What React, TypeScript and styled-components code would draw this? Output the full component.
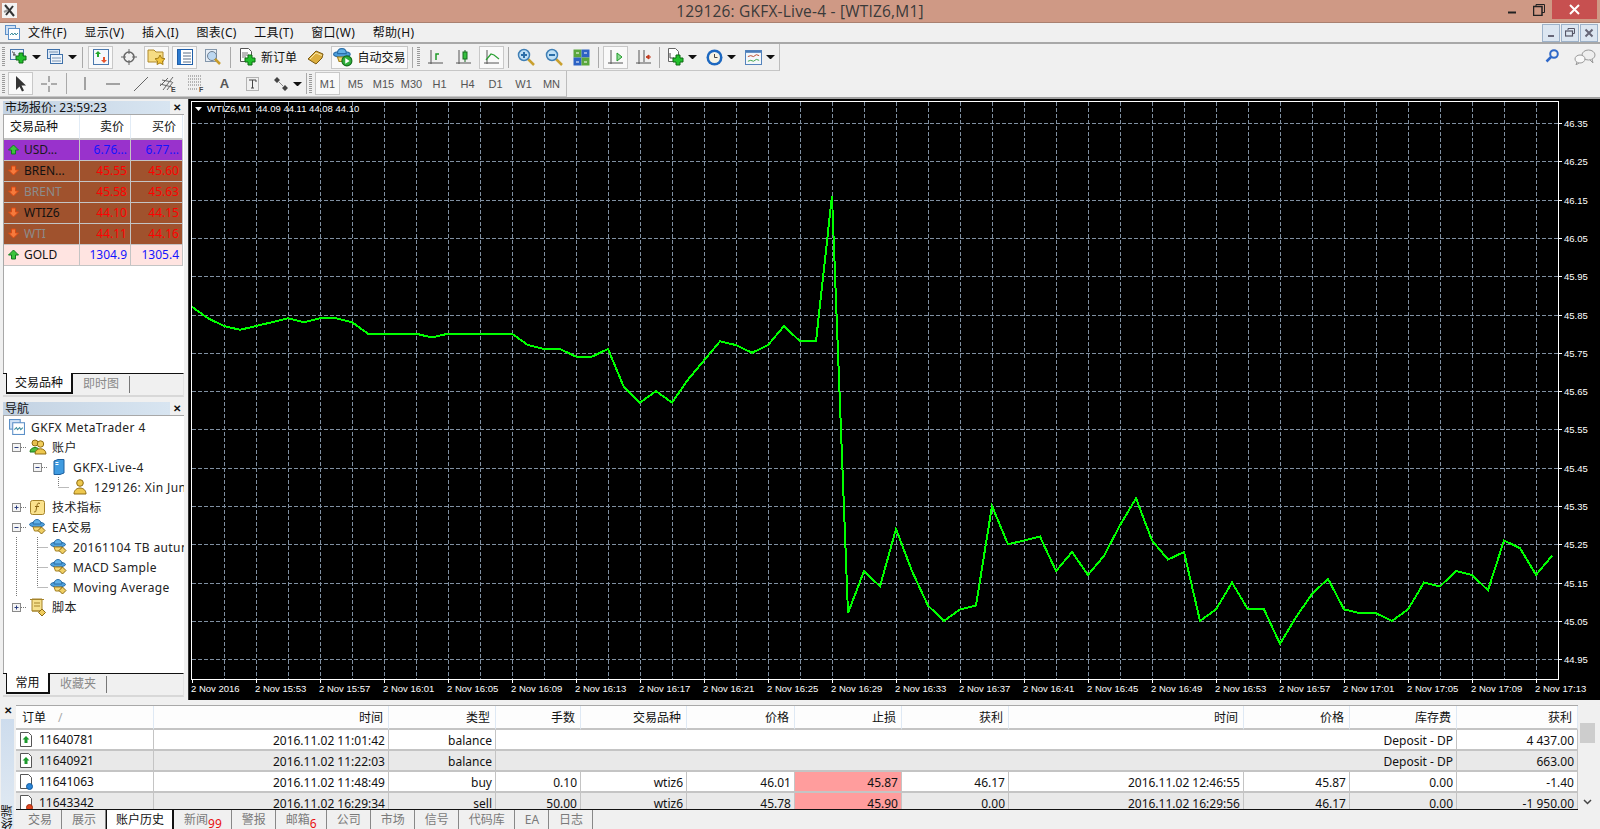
import React from 'react';
import styled, { createGlobalStyle } from 'styled-components';

const UI_FONT = '"Noto Sans", "Noto Sans CJK SC", sans-serif';

const GlobalStyle = createGlobalStyle`
  html, body { margin: 0; padding: 0; background: #f0f0f0; overflow: hidden; }
  body { font-family: ${UI_FONT}; font-size: 12px; color: #111; }
  * { box-sizing: border-box; }
`;

const PRICES = [
  45.87, 45.84, 45.82, 45.81, 45.82, 45.83, 45.84, 45.83, 45.84, 45.84, 45.83, 45.8, 45.8, 45.8, 45.8, 45.79, 45.8, 45.8,
  45.8, 45.8, 45.8, 45.77, 45.76, 45.76, 45.74, 45.74, 45.76, 45.66, 45.62, 45.65, 45.62, 45.68, 45.73, 45.78, 45.77,
  45.75, 45.77, 45.82, 45.78, 45.78, 46.16, 45.07, 45.18, 45.14, 45.29, 45.18, 45.09, 45.05, 45.08, 45.09, 45.35, 45.25,
  45.26, 45.27, 45.18, 45.23, 45.17, 45.22, 45.3, 45.37, 45.26, 45.21, 45.23, 45.05, 45.08, 45.15, 45.08, 45.08, 44.99,
  45.06, 45.12, 45.16, 45.08, 45.07, 45.07, 45.05, 45.08, 45.15, 45.14, 45.18, 45.17, 45.13, 45.26, 45.24, 45.17, 45.22,
];

const TIME_LABELS = [
  '2 Nov 2016', '2 Nov 15:53', '2 Nov 15:57', '2 Nov 16:01', '2 Nov 16:05', '2 Nov 16:09', '2 Nov 16:13', '2 Nov 16:17',
  '2 Nov 16:21', '2 Nov 16:25', '2 Nov 16:29', '2 Nov 16:33', '2 Nov 16:37', '2 Nov 16:41', '2 Nov 16:45', '2 Nov 16:49',
  '2 Nov 16:53', '2 Nov 16:57', '2 Nov 17:01', '2 Nov 17:05', '2 Nov 17:09', '2 Nov 17:13',
];

const QUOTES = [
  { name: 'USD...', bid: '6.76...', ask: '6.77...', bg: '#9932cc', up: true, nameColor: '#1a1a1a', priceColor: '#1414ff' },
  { name: 'BREN...', bid: '45.55', ask: '45.60', bg: '#a0522d', up: false, nameColor: '#111', priceColor: '#ff0000' },
  { name: 'BRENT', bid: '45.58', ask: '45.63', bg: '#a0522d', up: false, nameColor: '#8c8c8c', priceColor: '#ff0000' },
  { name: 'WTIZ6', bid: '44.10', ask: '44.15', bg: '#a0522d', up: false, nameColor: '#111', priceColor: '#ff0000' },
  { name: 'WTI', bid: '44.11', ask: '44.16', bg: '#a0522d', up: false, nameColor: '#8c8c8c', priceColor: '#ff0000' },
  { name: 'GOLD', bid: '1304.9', ask: '1305.4', bg: '#ffe4e1', up: true, nameColor: '#111', priceColor: '#1414ff' },
];

const MENU = ['文件(F)', '显示(V)', '插入(I)', '图表(C)', '工具(T)', '窗口(W)', '帮助(H)'];
const PERIODS = ['M1', 'M5', 'M15', 'M30', 'H1', 'H4', 'D1', 'W1', 'MN'];
const COLUMNS = ['订单', '时间', '类型', '手数', '交易品种', '价格', '止损', '获利', '时间', '价格', '库存费', '获利'];
const GRID = '138px 235px 107px 85px 106px 108px 107px 107px 235px 106px 107px 121px';

/* ---------- icons ---------- */

const Plus = ({ x = 8, y = 8 }: { x?: number; y?: number }) => (
  <path d={`M${x + 3} ${y}h4v3h3v4h-3v3h-4v-3h-3v-4h3z`} fill="#22c02c" stroke="#0d6b12" strokeWidth="1" />
);

const NewChartIcon = () => (
  <svg width="20" height="18" viewBox="0 0 20 18">
    <rect x="1.5" y="1.5" width="13" height="10" fill="#e8f0fa" stroke="#4a78ad" />
    <path d="M3 4h1M5 4v3M4 7h3" stroke="#333" fill="none" />
    <Plus x={7} y={5} />
  </svg>
);

const ProfilesIcon = () => (
  <svg width="18" height="18" viewBox="0 0 18 18">
    <rect x="1.5" y="1.5" width="12" height="9" fill="#dbe8f6" stroke="#3f70a8" />
    <rect x="4.5" y="6.5" width="12" height="9" fill="#eef4fb" stroke="#3f70a8" />
    <path d="M3 4h9M6 10h9M6 13h9" stroke="#7a94b2" />
  </svg>
);

const WatchIcon = () => (
  <svg width="16" height="16" viewBox="0 0 16 16">
    <rect x="0.5" y="0.5" width="15" height="15" fill="#f5f8fc" stroke="#4a78ad" />
    <path d="M5 2l3 3H6v3H4V5H2z" fill="#23a82c" />
    <path d="M11 14l-3-3h2V8h2v3h2z" fill="#e8522a" />
  </svg>
);

const CrossCircleIcon = () => (
  <svg width="16" height="16" viewBox="0 0 16 16" fill="none" stroke="#666">
    <circle cx="8" cy="8" r="5" strokeWidth="1.5" />
    <path d="M8 0v5M8 11v5M0 8h5M11 8h5" />
  </svg>
);

const FolderStarIcon = () => (
  <svg width="20" height="18" viewBox="0 0 20 18">
    <path d="M1 2h6l2 2h7v10H1z" fill="#f6dc84" stroke="#b08a2c" />
    <path d="M13 7l1.6 3.2 3.4.5-2.5 2.4.6 3.4-3.1-1.6-3 1.6.6-3.4L8 10.7l3.4-.5z" fill="#f4c63c" stroke="#a37c16" />
  </svg>
);

const NavigatorIcon = () => (
  <svg width="16" height="16" viewBox="0 0 16 16">
    <rect x="0.5" y="0.5" width="15" height="15" fill="#fff" stroke="#1f5ea8" />
    <rect x="1" y="1" width="3" height="14" fill="#2e7cd0" />
    <path d="M6 4h8M6 7h8M6 10h8M6 13h8" stroke="#5a6f86" />
  </svg>
);

const TesterIcon = () => (
  <svg width="18" height="18" viewBox="0 0 18 18">
    <rect x="1.5" y="1.5" width="11" height="12" fill="#e6edf5" stroke="#8497ab" />
    <circle cx="8" cy="8" r="4.5" fill="#bcd7f0" stroke="#6f7f90" />
    <path d="M11 11l5 5" stroke="#c79b2b" strokeWidth="2.5" />
  </svg>
);

const NewOrderIcon = () => (
  <svg width="18" height="20" viewBox="0 0 18 20">
    <path d="M1.5 1.5h8l3 3v10h-11z" fill="#fff" stroke="#555" />
    <path d="M3 6h6M3 8h7M3 10h4" stroke="#777" />
    <Plus x={6} y={8} />
  </svg>
);

const BookIcon = () => (
  <svg width="18" height="16" viewBox="0 0 18 16">
    <path d="M1 10L9 2l7 3-1 4-6 6z" fill="#dcae3e" stroke="#7b5a12" />
    <path d="M3 10l6-6 6 2.5" fill="none" stroke="#f7e7a8" />
  </svg>
);

const HatIcon = ({ size = 18, badge = 'play' }: { size?: number; badge?: 'play' | 'diamond' }) => (
  <svg width={size} height={size} viewBox="0 0 18 18">
    <ellipse cx="8" cy="6.5" rx="7.5" ry="2.5" fill="#4ea0dc" stroke="#2a6ea8" />
    <path d="M4 6c0-6 8-6 8 0z" fill="#62b2e8" stroke="#2a6ea8" />
    <path d="M4 9h8l-1.5 4h-5z" fill="#f3d778" stroke="#a5801c" />
    {badge === 'play' ? (
      <>
        <circle cx="12.5" cy="12.5" r="4.5" fill="#2fae3a" stroke="#126b1a" />
        <path d="M11 10l4 2.5-4 2.5z" fill="#fff" />
      </>
    ) : (
      <path d="M12.5 9l3.5 3.5-3.5 3.5-3.5-3.5z" fill="#f0cf63" stroke="#8d6b12" />
    )}
  </svg>
);

const Axes = () => <path d="M4 1v14M1 14h15" stroke="#555" fill="none" />;

const BarChartIcon = () => (
  <svg width="18" height="17" viewBox="0 0 18 17">
    <Axes />
    <path d="M9 11V5h3" stroke="#1f9a28" strokeWidth="1.5" fill="none" />
  </svg>
);

const CandleIcon = () => (
  <svg width="18" height="17" viewBox="0 0 18 17">
    <Axes />
    <path d="M10 1v12" stroke="#146b1c" />
    <rect x="8" y="3" width="4" height="7" fill="#35c03f" stroke="#146b1c" />
  </svg>
);

const LineChartIcon = () => (
  <svg width="18" height="17" viewBox="0 0 18 17">
    <Axes />
    <path d="M3 11l5-6 3 1 5 4" stroke="#2aa033" strokeWidth="1.2" fill="none" />
  </svg>
);

const ZoomIcon = ({ minus = false }: { minus?: boolean }) => (
  <svg width="18" height="18" viewBox="0 0 18 18">
    <path d="M11 11l6 6" stroke="#c9a02f" strokeWidth="2.5" />
    <circle cx="7" cy="7" r="5.5" fill="#bfe0f6" stroke="#3f7fb5" strokeWidth="1.5" />
    <path d={minus ? 'M4 7h6' : 'M4 7h6M7 4v6'} stroke="#2a6ea8" strokeWidth="2" />
  </svg>
);

const TileIcon = () => (
  <svg width="17" height="17" viewBox="0 0 17 17">
    <rect x="0.5" y="0.5" width="8" height="8" fill="#5aa73c" />
    <rect x="8.5" y="0.5" width="8" height="8" fill="#2d62c4" />
    <rect x="0.5" y="8.5" width="8" height="8" fill="#2d62c4" />
    <rect x="8.5" y="8.5" width="8" height="8" fill="#5aa73c" />
    <path d="M3 4h3M11 4h3M3 13h3M11 13h3" stroke="#fff" />
  </svg>
);

const AutoScrollIcon = () => (
  <svg width="18" height="17" viewBox="0 0 18 17">
    <Axes />
    <path d="M10 4l5 4-5 4z" fill="#8fdc94" stroke="#1f9a28" />
  </svg>
);

const ShiftIcon = () => (
  <svg width="18" height="17" viewBox="0 0 18 17">
    <Axes />
    <path d="M9 1v12" stroke="#555" />
    <path d="M16 8h-3M14 6l-3 2 3 2z" fill="#c23b1e" stroke="#c23b1e" />
  </svg>
);

const TemplateIcon = () => (
  <svg width="18" height="20" viewBox="0 0 18 20">
    <path d="M1.5 1.5h7l3 3v10h-10z" fill="#fff" stroke="#666" />
    <path d="M3 6v5h4" stroke="#444" fill="none" />
    <Plus x={6} y={8} />
  </svg>
);

const ClockIcon = () => (
  <svg width="17" height="17" viewBox="0 0 17 17">
    <circle cx="8.5" cy="8.5" r="8" fill="#1d68c0" />
    <circle cx="8.5" cy="8.5" r="5.5" fill="#f6f3e4" />
    <path d="M8.5 5v3.5h3" stroke="#444" fill="none" />
  </svg>
);

const PeriodsIcon = () => (
  <svg width="17" height="15" viewBox="0 0 18 16">
    <rect x="0.5" y="0.5" width="17" height="15" fill="#f4f7fb" stroke="#4a7cb8" />
    <rect x="1" y="1" width="16" height="2" fill="#4a7cb8" />
    <path d="M3 7l3-1 3 1 3-2 3 1" stroke="#b5452a" fill="none" />
    <path d="M3 12l3-1 3 1 3-2 3 1" stroke="#3da344" fill="none" />
  </svg>
);

const CursorIcon = () => (
  <svg width="14" height="16" viewBox="0 0 14 16">
    <path d="M2 0v14l3.5-3.5 2.5 5 2-1-2.5-5H12z" fill="#333" />
  </svg>
);

const CrossIcon = () => (
  <svg width="16" height="16" viewBox="0 0 16 16">
    <path d="M0 8h6M10 8h6M8 0v6M8 10v6" stroke="#666" />
  </svg>
);

const VLineIcon = () => (
  <svg width="16" height="16" viewBox="0 0 16 16">
    <path d="M8 1v13" stroke="#555" />
  </svg>
);

const HLineIcon = () => (
  <svg width="16" height="16" viewBox="0 0 16 16">
    <path d="M1 8h14" stroke="#555" />
  </svg>
);

const TrendIcon = () => (
  <svg width="16" height="16" viewBox="0 0 16 16">
    <path d="M1 15L15 1" stroke="#666" />
  </svg>
);

const ChannelIcon = () => (
  <svg width="20" height="18" viewBox="0 0 20 18">
    <path d="M1 11l8-8M4 15L14 2M8 15l6-8M1 9l12 3M3 5l10 2" stroke="#666" fill="none" />
    <text x="12" y="17" fontSize="7" fontWeight="700" fill="#444" fontFamily="Liberation Sans, sans-serif">E</text>
  </svg>
);

const FiboIcon = () => (
  <svg width="20" height="18" viewBox="0 0 20 18">
    <path d="M1 1h14M1 4h14M1 7h14M1 10h14M1 14h10" stroke="#777" strokeDasharray="1 1" />
    <text x="12" y="17" fontSize="7" fontWeight="700" fill="#444" fontFamily="Liberation Sans, sans-serif">F</text>
  </svg>
);

const TextLabelIcon = () => (
  <svg width="16" height="16" viewBox="0 0 16 16">
    <rect x="1.5" y="1.5" width="12" height="13" fill="none" stroke="#777" strokeDasharray="1 1" />
    <path d="M4 4h7v2M7.5 4v8M6 12h3" stroke="#444" fill="none" />
  </svg>
);

const ShapesIcon = () => (
  <svg width="16" height="16" viewBox="0 0 16 16">
    <path d="M4 1l3 3-3 3-3-3zM12 9l3 3-3 3-3-3z" fill="#444" />
    <path d="M6 6l4 4" stroke="#888" />
  </svg>
);

const SearchIcon = () => (
  <svg width="14" height="14" viewBox="0 0 14 14">
    <circle cx="9" cy="5" r="3.8" fill="none" stroke="#2f68c8" strokeWidth="2" />
    <path d="M6 8l-4.5 4.5" stroke="#2f68c8" strokeWidth="2.5" />
  </svg>
);

const ChatIcon = () => (
  <svg width="22" height="16" viewBox="0 0 22 16">
    <ellipse cx="14.5" cy="6" rx="6.5" ry="5" fill="#eee" stroke="#999" />
    <ellipse cx="6" cy="10" rx="5" ry="4" fill="#f8f8f8" stroke="#999" />
    <path d="M18 10l1 4-3-3M3 13l-1 3 3-2" fill="#ddd" stroke="#999" />
  </svg>
);

const AppLogo = () => (
  <svg width="15" height="15" viewBox="0 0 15 15">
    <rect width="15" height="15" fill="#f4f4f4" />
    <path d="M3 2l9 11M11 3l-7 9" stroke="#333" strokeWidth="2" />
    <path d="M2 9l4-2" stroke="#9a9a9a" strokeWidth="2" />
  </svg>
);

const ChartDocIcon = ({ size = 15 }: { size?: number }) => (
  <svg width={size} height={size} viewBox="0 0 15 15">
    <rect x="0.5" y="0.5" width="10" height="9" fill="#cfe1f5" stroke="#5c90c8" />
    <rect x="3.5" y="3.5" width="11" height="11" fill="#fff" stroke="#5c90c8" />
    <path d="M5 10l2-2 1 2 2-2 1 2 2-2" fill="none" stroke="#3e8e9e" />
  </svg>
);

const UsersIcon = () => (
  <svg width="18" height="18" viewBox="0 0 18 18">
    <circle cx="6" cy="5" r="3" fill="#e6bf4e" stroke="#8f6c12" />
    <path d="M1 14c0-6 10-6 10 0z" fill="#4cbb3e" stroke="#1f7d18" />
    <circle cx="11.5" cy="6" r="3.2" fill="#f0cd5c" stroke="#8f6c12" />
    <path d="M6 16c0-7 11-7 11 0z" fill="#eec84e" stroke="#8f6c12" />
  </svg>
);

const ServerIcon = () => (
  <svg width="12" height="16" viewBox="0 0 12 16">
    <path d="M1 2l4-1.5h6V14l-4 1.5H1z" fill="#3f9be0" stroke="#1d5f9e" />
    <rect x="2.5" y="3" width="3" height="1" fill="#fff" />
    <rect x="2.5" y="5" width="3" height="1" fill="#fff" />
  </svg>
);

const UserIcon = () => (
  <svg width="14" height="16" viewBox="0 0 14 16">
    <circle cx="7" cy="4" r="3.3" fill="#eec84e" stroke="#8f6c12" />
    <path d="M1 15c0-8 12-8 12 0z" fill="#eec84e" stroke="#8f6c12" />
  </svg>
);

const FunctionIcon = () => (
  <svg width="15" height="15" viewBox="0 0 15 15">
    <rect x="0.5" y="0.5" width="14" height="14" rx="2" fill="#fae28c" stroke="#a5832a" />
    <path d="M10 3.5c-2-1-2.5 0-3 2l-1 5c-.3 1.5-1 2-2 1M5 6.5h4" stroke="#8a6510" fill="none" />
  </svg>
);

const ScriptIcon = () => (
  <svg width="18" height="18" viewBox="0 0 18 18">
    <path d="M3 1h10v12H3z" fill="#f6e08c" stroke="#a5832a" />
    <path d="M1 1.5h14M3 13h8M5 5h6M5 8h6" stroke="#a5832a" fill="none" />
    <path d="M13 11l3.5 3.5-3.5 3.5-3.5-3.5z" fill="#efcc5e" stroke="#8d6b12" />
  </svg>
);

const QuoteArrow = ({ up }: { up: boolean }) => (
  <svg width="11" height="11" viewBox="0 0 11 11">
    {up ? (
      <path d="M5.5 1L10.5 6H7.5V10H3.5V6H.5z" fill="#3cc43c" stroke="#127a20" />
    ) : (
      <path d="M5.5 10L.5 5H3.5V1H7.5V5H10.5z" fill="#f67a3c" stroke="#d84a14" />
    )}
  </svg>
);

const OrderIcon = ({ kind }: { kind: 'balance' | 'buy' | 'sell' }) => (
  <svg width="13" height="16" viewBox="0 0 13 16">
    <path d="M.5 .5h8l3 3v11h-11z" fill="#fff" stroke="#555" />
    {kind === 'balance' && <path d="M6 4l3.5 3.5H7.500V11h-3V7.500h-2z" fill="#1c9a2c" />}
    {kind === 'buy' && <circle cx="9.5" cy="12.5" r="3" fill="#2a86d8" stroke="#125a9e" />}
    {kind === 'sell' && <circle cx="9.5" cy="12.5" r="3" fill="#e0441c" stroke="#9e2a0c" />}
  </svg>
);

/* ---------- frame ---------- */

const Page = styled.div`
  width: 1600px;
  height: 829px;
  display: flex;
  flex-direction: column;
  overflow: hidden;
  background: #f0f0f0;
`;

const TitleBar = styled.div`
  height: 23px;
  flex: none;
  display: grid;
  grid-template-columns: 1fr auto 1fr;
  background: #cf9985;
  border-bottom: 1px solid #a98070;
`;

const TitleLogo = styled.div`
  padding: 3px 0 0 2px;
`;

const TitleText = styled.div`
  font-family: "Open Sans", sans-serif;
  font-size: 15.5px;
  line-height: 23px;
  color: #3a3a3a;
  letter-spacing: 0.2px;
`;

const WindowControls = styled.div`
  display: flex;
  justify-content: flex-end;
  align-items: flex-start;
  padding-right: 3px;
`;

const WindowButton = styled.div<{ $w: number; $close?: boolean }>`
  width: ${(p) => p.$w}px;
  height: 19px;
  display: flex;
  align-items: center;
  justify-content: center;
  background: ${(p) => (p.$close ? '#c75050' : 'transparent')};
`;

const MenuBar = styled.div`
  height: 21px;
  flex: none;
  display: flex;
  align-items: center;
  padding: 0 2px 0 5px;
  border-bottom: 2px solid #a8a8a8;
`;

const MenuLogo = styled.div`
  width: 23px;
  display: flex;
`;

const MenuItem = styled.div`
  margin-right: 17.6px;
  line-height: 19px;
  letter-spacing: 0.3px;
`;

const MdiButtons = styled.div`
  margin-left: auto;
  display: flex;
  gap: 1px;
`;

const MdiButton = styled.div`
  width: 18px;
  height: 18px;
  border: 1px solid #9db2c9;
  background: #dce6f1;
  display: flex;
  align-items: center;
  justify-content: center;
`;

const ToolRow = styled.div<{ $h: number }>`
  height: ${(p) => p.$h}px;
  flex: none;
  display: flex;
  align-items: stretch;
`;

const Band = styled.div`
  display: flex;
  align-items: center;
  gap: 3px;
  padding: 0 2px;
  border-right: 1px solid #bdbdbd;
  border-bottom: 1px solid #c6c6c6;
`;

const Grip = styled.div`
  width: 3px;
  height: 20px;
  flex: none;
  background: repeating-linear-gradient(to bottom, #9a9a9a 0 1px, transparent 1px 2px);
`;

const ToolButton = styled.div<{ $w?: number; $on?: boolean }>`
  width: ${(p) => p.$w ?? 25}px;
  height: 23px;
  flex: none;
  display: flex;
  align-items: center;
  justify-content: center;
  gap: 4px;
  font-size: 12px;
  border: 1px solid ${(p) => (p.$on ? '#c8c8c8' : 'transparent')};
  background: ${(p) => (p.$on ? '#f9f9f9' : 'transparent')};
`;

const Caret = styled.div<{ $tuck?: boolean }>`
  width: 9px;
  height: 4px;
  flex: none;
  margin: ${(p) => (p.$tuck ? '0 2px 0 -3px' : '0 0 0 -1px')};
  border-left: 4px solid transparent;
  border-right: 4px solid transparent;
  border-top: 4px solid #111;
`;

const ToolSep = styled.div<{ $m?: number }>`
  width: 1px;
  height: 21px;
  flex: none;
  margin: 0 ${(p) => p.$m ?? 2}px;
  background: #a9a9a9;
`;

const Period = styled(ToolButton)`
  font-family: "Liberation Sans", sans-serif;
  font-size: 11px;
  color: #555;
`;

const ToolSpacer = styled.div`
  flex: 1;
  display: flex;
  justify-content: flex-end;
  align-items: flex-start;
  gap: 15px;
  padding: 5px 4px 0 0;
`;

const TextA = styled.span`
  font-family: "Liberation Sans", sans-serif;
  font-weight: 700;
  font-size: 13px;
  color: #555;
`;

/* ---------- workspace ---------- */

const Workspace = styled.div`
  height: 605px;
  flex: none;
  display: flex;
  border-top: 2px solid #a0a0a0;
`;

const LeftColumn = styled.div`
  width: 188px;
  flex: none;
  padding: 1px 4px 0 3px;
  display: flex;
  flex-direction: column;
  gap: 4px;
`;

const Panel = styled.div<{ $h: number }>`
  height: ${(p) => p.$h}px;
  display: flex;
  flex-direction: column;
  background: #f0f0f0;
`;

const PanelTitle = styled.div`
  height: 14px;
  flex: none;
  display: flex;
  justify-content: space-between;
  align-items: center;
  font-size: 12px;
`;

const PanelCaption = styled.div`
  width: 167px;
  height: 13px;
  padding-left: 2px;
  line-height: 13px;
  background: linear-gradient(to right, #c3d2e2, #d8e5f1);
  white-space: nowrap;
`;

const PanelClose = styled.div`
  width: 14px;
  font-weight: 700;
  font-size: 10px;
  line-height: 13px;
  font-family: "Liberation Sans", sans-serif;
  text-align: center;
`;

const PanelBody = styled.div`
  flex: 1;
  background: #fff;
  border-top: 1px solid #a8a8a8;
  border-left: 1px solid #a8a8a8;
  overflow: hidden;
`;

const QuoteGrid = styled.div`
  display: grid;
  grid-template-columns: 76px 51px 52px;
`;

const QuoteHead = styled.div<{ $left?: boolean }>`
  height: 25px;
  line-height: 23px;
  padding: 0 6px;
  text-align: ${(p) => (p.$left ? 'left' : 'right')};
  border-right: 1px solid #e2ecf6;
  border-bottom: 2px solid #c4c4c4;
`;

const QuoteCell = styled.div<{ $bg: string; $color: string }>`
  height: 21px;
  line-height: 19px;
  display: flex;
  align-items: center;
  justify-content: flex-end;
  gap: 5px;
  padding: 0 3px 1px;
  white-space: nowrap;
  overflow: hidden;
  background: ${(p) => p.$bg};
  color: ${(p) => p.$color};
  border-right: 1px solid #c4c4c4;
  border-bottom: 1px solid #c4c4c4;
`;

const QuoteName = styled(QuoteCell)`
  justify-content: flex-start;
  padding-left: 4px;
`;

const StripTabs = styled.div`
  height: 24px;
  flex: none;
  display: flex;
  align-items: flex-start;
  padding-left: 3px;
  border-top: 1px solid #111;
  border-right: 1px solid #e4e4e4;
  border-bottom: 2px solid #d8d8d8;
`;

const StripTab = styled.div<{ $on?: boolean; $w: number }>`
  width: ${(p) => p.$w}px;
  height: ${(p) => (p.$on ? 21 : 17)}px;
  margin-top: ${(p) => (p.$on ? -1 : 2)}px;
  flex: none;
  line-height: ${(p) => (p.$on ? 19 : 15)}px;
  text-align: center;
  color: ${(p) => (p.$on ? '#111' : '#8a8a8a')};
  background: ${(p) => (p.$on ? '#fff' : 'transparent')};
  border-left: ${(p) => (p.$on ? '1px solid #111' : 'none')};
  border-right: ${(p) => (p.$on ? '2px solid #111' : '1px solid #777')};
  border-bottom: ${(p) => (p.$on ? '2px solid #111' : 'none')};
`;

const Tree = styled(PanelBody)`
  display: flex;
  flex-direction: column;
  padding: 1px 0 0 2px;
`;

const TreeRow = styled.div`
  height: 20px;
  flex: none;
  display: flex;
  align-items: center;
  white-space: nowrap;
  color: #222;
  letter-spacing: 0.4px;
`;

const TreeIcon = styled.div`
  width: 21px;
  flex: none;
  display: flex;
  justify-content: center;
  margin-right: 4px;
`;

type GuideKind = 'none' | 'pipe' | 'elbow' | 'elbowPipe' | 'plus' | 'minus';

const Guide = ({ kind }: { kind: GuideKind }) => (
  <svg width="21" height="20" viewBox="0 0 21 20" style={{ flex: 'none' }}>
    <g stroke="#777" strokeDasharray="1 1" fill="none">
      {(kind === 'pipe' || kind === 'elbowPipe') && <path d="M10.5 0v20" />}
      {kind === 'elbow' && <path d="M10.5 0v10" />}
      {(kind === 'elbow' || kind === 'elbowPipe') && <path d="M10.5 10.5H21" />}
      {(kind === 'plus' || kind === 'minus') && <path d="M15 10.5h6" />}
    </g>
    {(kind === 'plus' || kind === 'minus') && (
      <>
        <rect x="6.5" y="6.5" width="8" height="8" fill="#f4f4f4" stroke="#8a8a8a" />
        <path d={kind === 'minus' ? 'M8.5 10.5h4' : 'M8.5 10.5h4M10.5 8.5v4'} stroke="#2c3e80" />
      </>
    )}
  </svg>
);

const ChartPane = styled.div`
  width: 1412px;
  height: 601px;
  flex: none;
  background: #000;
  border-left: 1px solid #333;
`;

const ChartSvg = styled.svg`
  display: block;
  font-family: "Liberation Sans", sans-serif;
  font-size: 9.5px;
`;

const Chart = () => {
  const priceY = (p: number) => 123 + (46.35 - p) * 383;
  const vLines = Array.from({ length: 42 }, (_, i) => 224 + i * 32);
  const hLabels = Array.from({ length: 15 }, (_, i) => ({ y: Math.round(123 + i * 38.3), label: (46.35 - i * 0.1).toFixed(2) }));
  const points = PRICES.map((p, i) => `${192 + i * 16},${priceY(p).toFixed(1)}`).join(' ');

  return (
    <ChartSvg width="1411" height="601" viewBox="189 99 1411 601">
      <g stroke="#8090a2" strokeDasharray="4 2">
        {vLines.map((x) => (
          <line key={x} x1={x + 0.5} x2={x + 0.5} y1="102" y2="679" />
        ))}
        {hLabels.map((h) => (
          <line key={h.y} x1="192" x2="1558" y1={h.y + 0.5} y2={h.y + 0.5} />
        ))}
      </g>
      <polyline points={points} fill="none" stroke="#00ff00" strokeWidth="2" shapeRendering="crispEdges" />
      <rect x="191.5" y="101.5" width="1367" height="578" fill="none" stroke="#fff" />
      {hLabels.map((h) => (
        <g key={h.label}>
          <line x1="1559" x2="1562" y1={h.y + 0.5} y2={h.y + 0.5} stroke="#fff" />
          <text x="1564" y={h.y + 4} fill="#fff">{h.label}</text>
        </g>
      ))}
      {TIME_LABELS.map((t, i) => (
        <g key={t}>
          <line x1={192.5 + i * 64} x2={192.5 + i * 64} y1="680" y2="683" stroke="#fff" />
          <text x={191 + i * 64} y="692" fill="#fff">{t}</text>
        </g>
      ))}
      <path d="M195 107h7l-3.5 4z" fill="#fff" />
      <text x="207" y="112" fill="#fff">WTIZ6,M1</text>
      <text x="257" y="112" fill="#fff">44.09 44.11 44.08 44.10</text>
    </ChartSvg>
  );
};

/* ---------- terminal ---------- */

const Terminal = styled.div`
  flex: 1;
  display: flex;
  min-height: 0;
`;

const TermSide = styled.div`
  width: 16px;
  flex: none;
  padding-top: 3px;
  display: flex;
  flex-direction: column;
`;

const TermClose = styled.div`
  height: 14px;
  font-family: "Liberation Sans", sans-serif;
  font-weight: 700;
  font-size: 10px;
  text-align: center;
`;

const TermCaption = styled.div`
  flex: 1;
  margin: 0 2px 0 1px;
  display: flex;
  align-items: flex-end;
  justify-content: center;
  background: linear-gradient(to bottom, #cddced, #e3ebf3);
`;

const TermCaptionText = styled.div`
  writing-mode: vertical-rl;
  transform: rotate(180deg);
  line-height: 12px;
`;

const TermMain = styled.div`
  flex: 1;
  min-width: 0;
  display: flex;
  flex-direction: column;
  padding-top: 3px;
`;

const TableArea = styled.div`
  height: 104px;
  flex: none;
  display: flex;
`;

const OrdersTable = styled.div`
  width: 1562px;
  flex: none;
  overflow: hidden;
  background: #fff;
  border-top: 1px solid #a8a8a8;
`;

const TableRow = styled.div<{ $shade?: boolean }>`
  display: grid;
  grid-template-columns: ${GRID};
  background: ${(p) => (p.$shade ? '#e9e9e9' : '#fff')};
`;

const HeadCell = styled.div<{ $left?: boolean }>`
  height: 24px;
  line-height: 23px;
  padding: 0 5px 0 ${(p) => (p.$left ? 6 : 5)}px;
  text-align: ${(p) => (p.$left ? 'left' : 'right')};
  background: #fdfdfd;
  border-right: 1px solid #dfe9f4;
  border-bottom: 2px solid #c4c4c4;
`;

const SortMark = styled.span`
  margin-left: 12px;
  color: #aaa;
`;

const Cell = styled.div<{ $span?: number; $alert?: boolean }>`
  height: 21px;
  line-height: 22px;
  padding: 0 3px;
  text-align: right;
  white-space: nowrap;
  grid-column: span ${(p) => p.$span ?? 1};
  background: ${(p) => (p.$alert ? '#ff9d9d' : 'transparent')};
  border-right: 1px solid #c4c4c4;
  border-bottom: 2px solid #c4c4c4;
`;

const OrderCell = styled(Cell)`
  display: flex;
  align-items: center;
  gap: 6px;
  padding: 1px 3px 0 4px;
  text-align: left;
`;

const ScrollTrack = styled.div`
  width: 15px;
  margin-left: 2px;
  padding-top: 18px;
  display: flex;
  flex-direction: column;
  align-items: stretch;
`;

const ScrollThumb = styled.div`
  height: 20px;
  background: #cdcdcd;
`;

const ScrollArrow = styled.div`
  margin-top: auto;
  padding-bottom: 4px;
  display: flex;
  justify-content: center;
`;

const TabBar = styled.div`
  height: 20px;
  flex: none;
  width: 1562px;
  display: flex;
  padding-left: 2px;
  border-top: 1px solid #111;
`;

const BottomTab = styled.div<{ $on?: boolean }>`
  flex: none;
  display: flex;
  padding: 0 9px 0 10px;
  line-height: 19px;
  height: 19px;
  color: #7a7a7a;
  border-right: 1px solid #888;
  ${(p) =>
    p.$on &&
    `
    background: #fff;
    color: #111;
    padding: 0 8px 0 9px;
    border-left: 1px solid #111;
    border-right: 2px solid #111;
  `}
`;

const TabBadge = styled.span`
  align-self: flex-end;
  color: #e81010;
  font-size: 12px;
  line-height: 11px;
`;

type OrderRow = {
  id: string;
  icon: 'balance' | 'buy' | 'sell';
  open: string;
  type: string;
  comment?: string;
  cells?: string[];
  profit: string;
};

const ORDERS: OrderRow[] = [
  { id: '11640781', icon: 'balance', open: '2016.11.02 11:01:42', type: 'balance', comment: 'Deposit - DP', profit: '4 437.00' },
  { id: '11640921', icon: 'balance', open: '2016.11.02 11:22:03', type: 'balance', comment: 'Deposit - DP', profit: '663.00' },
  {
    id: '11641063', icon: 'buy', open: '2016.11.02 11:48:49', type: 'buy',
    cells: ['0.10', 'wtiz6', '46.01', '45.87', '46.17', '2016.11.02 12:46:55', '45.87', '0.00'],
    profit: '-1.40',
  },
  {
    id: '11643342', icon: 'sell', open: '2016.11.02 16:29:34', type: 'sell',
    cells: ['50.00', 'wtiz6', '45.78', '45.90', '0.00', '2016.11.02 16:29:56', '46.17', '0.00'],
    profit: '-1 950.00',
  },
];

const TABS = [
  { label: '交易' }, { label: '展示' }, { label: '账户历史', on: true }, { label: '新闻', badge: '99' }, { label: '警报' },
  { label: '邮箱', badge: '6' }, { label: '公司' }, { label: '市场' }, { label: '信号' }, { label: '代码库' }, { label: 'EA' }, { label: '日志' },
];

export default function App() {
  return (
    <Page>
      <GlobalStyle />

      <TitleBar>
        <TitleLogo><AppLogo /></TitleLogo>
        <TitleText>129126: GKFX-Live-4 - [WTIZ6,M1]</TitleText>
        <WindowControls>
          <WindowButton $w={27}>
            <svg width="10" height="10" viewBox="0 0 10 10"><path d="M1 7.5h8" stroke="#222" strokeWidth="2" /></svg>
          </WindowButton>
          <WindowButton $w={27}>
            <svg width="12" height="12" viewBox="0 0 12 12" fill="none" stroke="#222">
              <path d="M3 2.5V.5h8.5v8H9" />
              <rect x=".5" y="2.5" width="8.5" height="9" strokeWidth="1.5" />
            </svg>
          </WindowButton>
          <WindowButton $w={45} $close>
            <svg width="11" height="11" viewBox="0 0 11 11"><path d="M1 1l9 9M10 1l-9 9" stroke="#fff" strokeWidth="2" /></svg>
          </WindowButton>
        </WindowControls>
      </TitleBar>

      <MenuBar>
        <MenuLogo><ChartDocIcon /></MenuLogo>
        {MENU.map((m) => <MenuItem key={m}>{m}</MenuItem>)}
        <MdiButtons>
          <MdiButton>
            <svg width="10" height="10" viewBox="0 0 10 10"><path d="M2 8h6" stroke="#667" strokeWidth="2" /></svg>
          </MdiButton>
          <MdiButton>
            <svg width="10" height="10" viewBox="0 0 10 10" fill="none" stroke="#556">
              <path d="M3 2V.5h6.5v5H8" />
              <rect x=".5" y="3" width="7" height="5" strokeWidth="1.2" />
            </svg>
          </MdiButton>
          <MdiButton>
            <svg width="10" height="10" viewBox="0 0 10 10"><path d="M1.5 1.5l7 7M8.5 1.5l-7 7" stroke="#667" strokeWidth="2" /></svg>
          </MdiButton>
        </MdiButtons>
      </MenuBar>

      <ToolRow $h={27}>
        <Band>
          <Grip />
          <ToolButton $w={22}><NewChartIcon /></ToolButton>
          <Caret />
          <ToolButton $w={22}><ProfilesIcon /></ToolButton>
          <Caret />
          <ToolSep />
          <ToolButton $on><WatchIcon /></ToolButton>
          <ToolButton><CrossCircleIcon /></ToolButton>
          <ToolButton $on><FolderStarIcon /></ToolButton>
          <ToolButton $on><NavigatorIcon /></ToolButton>
          <ToolButton><TesterIcon /></ToolButton>
          <ToolSep />
          <ToolButton $w={64}><NewOrderIcon />新订单</ToolButton>
          <ToolButton><BookIcon /></ToolButton>
          <ToolButton $w={77} $on><HatIcon size={20} />自动交易</ToolButton>
          <ToolSep $m={1} />
          <Grip />
          <ToolButton><BarChartIcon /></ToolButton>
          <ToolButton><CandleIcon /></ToolButton>
          <ToolButton $on><LineChartIcon /></ToolButton>
          <ToolSep $m={1} />
          <ToolButton><ZoomIcon /></ToolButton>
          <ToolButton><ZoomIcon minus /></ToolButton>
          <ToolButton><TileIcon /></ToolButton>
          <ToolSep $m={1} />
          <ToolButton $on><AutoScrollIcon /></ToolButton>
          <ToolButton><ShiftIcon /></ToolButton>
          <ToolSep $m={0} />
          <ToolButton><TemplateIcon /></ToolButton>
          <Caret $tuck />
          <ToolButton><ClockIcon /></ToolButton>
          <Caret $tuck />
          <ToolButton><PeriodsIcon /></ToolButton>
          <Caret $tuck />
        </Band>
        <ToolSpacer>
          <SearchIcon />
          <ChatIcon />
        </ToolSpacer>
      </ToolRow>

      <ToolRow $h={26}>
        <Band>
          <Grip />
          <ToolButton $on><CursorIcon /></ToolButton>
          <ToolButton><CrossIcon /></ToolButton>
          <ToolSep />
          <ToolButton><VLineIcon /></ToolButton>
          <ToolButton><HLineIcon /></ToolButton>
          <ToolButton><TrendIcon /></ToolButton>
          <ToolButton><ChannelIcon /></ToolButton>
          <ToolButton><FiboIcon /></ToolButton>
          <ToolButton><TextA>A</TextA></ToolButton>
          <ToolButton><TextLabelIcon /></ToolButton>
          <ToolButton><ShapesIcon /></ToolButton>
          <Caret $tuck />
          <ToolSep $m={-1} />
          <Grip />
          {PERIODS.map((p) => <Period key={p} $on={p === 'M1'}>{p}</Period>)}
        </Band>
      </ToolRow>

      <Workspace>
        <LeftColumn>
          <Panel $h={297}>
            <PanelTitle>
              <PanelCaption>市场报价: 23:59:23</PanelCaption>
              <PanelClose>✕</PanelClose>
            </PanelTitle>
            <PanelBody>
              <QuoteGrid>
                <QuoteHead $left>交易品种</QuoteHead>
                <QuoteHead>卖价</QuoteHead>
                <QuoteHead>买价</QuoteHead>
                {QUOTES.map((q) => (
                  <React.Fragment key={q.name}>
                    <QuoteName $bg={q.bg} $color={q.nameColor}>
                      <QuoteArrow up={q.up} />
                      {q.name}
                    </QuoteName>
                    <QuoteCell $bg={q.bg} $color={q.priceColor}>{q.bid}</QuoteCell>
                    <QuoteCell $bg={q.bg} $color={q.priceColor}>{q.ask}</QuoteCell>
                  </React.Fragment>
                ))}
              </QuoteGrid>
            </PanelBody>
            <StripTabs>
              <StripTab $on $w={67}>交易品种</StripTab>
              <StripTab $w={57}>即时图</StripTab>
            </StripTabs>
          </Panel>

          <Panel $h={296}>
            <PanelTitle>
              <PanelCaption>导航</PanelCaption>
              <PanelClose>✕</PanelClose>
            </PanelTitle>
            <Tree>
              <TreeRow><TreeIcon><ChartDocIcon size={16} /></TreeIcon>GKFX MetaTrader 4</TreeRow>
              <TreeRow><Guide kind="minus" /><TreeIcon><UsersIcon /></TreeIcon>账户</TreeRow>
              <TreeRow><Guide kind="none" /><Guide kind="minus" /><TreeIcon><ServerIcon /></TreeIcon>GKFX-Live-4</TreeRow>
              <TreeRow><Guide kind="none" /><Guide kind="none" /><Guide kind="elbow" /><TreeIcon><UserIcon /></TreeIcon>129126: Xin Jun</TreeRow>
              <TreeRow><Guide kind="plus" /><TreeIcon><FunctionIcon /></TreeIcon>技术指标</TreeRow>
              <TreeRow><Guide kind="minus" /><TreeIcon><HatIcon badge="diamond" /></TreeIcon>EA交易</TreeRow>
              <TreeRow><Guide kind="pipe" /><Guide kind="elbowPipe" /><TreeIcon><HatIcon badge="diamond" /></TreeIcon>20161104 TB autun</TreeRow>
              <TreeRow><Guide kind="pipe" /><Guide kind="elbowPipe" /><TreeIcon><HatIcon badge="diamond" /></TreeIcon>MACD Sample</TreeRow>
              <TreeRow><Guide kind="pipe" /><Guide kind="elbow" /><TreeIcon><HatIcon badge="diamond" /></TreeIcon>Moving Average</TreeRow>
              <TreeRow><Guide kind="plus" /><TreeIcon><ScriptIcon /></TreeIcon>脚本</TreeRow>
            </Tree>
            <StripTabs>
              <StripTab $on $w={44}>常用</StripTab>
              <StripTab $w={57}>收藏夹</StripTab>
            </StripTabs>
          </Panel>
        </LeftColumn>

        <ChartPane><Chart /></ChartPane>
      </Workspace>

      <Terminal>
        <TermSide>
          <TermClose>✕</TermClose>
          <TermCaption><TermCaptionText>终端</TermCaptionText></TermCaption>
        </TermSide>
        <TermMain>
          <TableArea>
            <OrdersTable>
              <TableRow>
                {COLUMNS.map((c, i) => (
                  <HeadCell key={`${c}${i}`} $left={i === 0}>
                    {c}
                    {i === 0 && <SortMark>/</SortMark>}
                  </HeadCell>
                ))}
              </TableRow>
              {ORDERS.map((o, i) => (
                <TableRow key={o.id} $shade={i % 2 === 1}>
                  <OrderCell><OrderIcon kind={o.icon} />{o.id}</OrderCell>
                  <Cell>{o.open}</Cell>
                  <Cell>{o.type}</Cell>
                  {o.comment ? (
                    <Cell $span={8}>{o.comment}</Cell>
                  ) : (
                    o.cells?.map((c, j) => <Cell key={j} $alert={j === 3}>{c}</Cell>)
                  )}
                  <Cell>{o.profit}</Cell>
                </TableRow>
              ))}
            </OrdersTable>
            <ScrollTrack>
              <ScrollThumb />
              <ScrollArrow>
                <svg width="9" height="6" viewBox="0 0 9 6"><path d="M1 1l3.5 3.5L8 1" fill="none" stroke="#444" strokeWidth="1.5" /></svg>
              </ScrollArrow>
            </ScrollTrack>
          </TableArea>
          <TabBar>
            {TABS.map((t) => (
              <BottomTab key={t.label} $on={t.on}>
                {t.label}
                {t.badge && <TabBadge>{t.badge}</TabBadge>}
              </BottomTab>
            ))}
          </TabBar>
        </TermMain>
      </Terminal>
    </Page>
  );
}
